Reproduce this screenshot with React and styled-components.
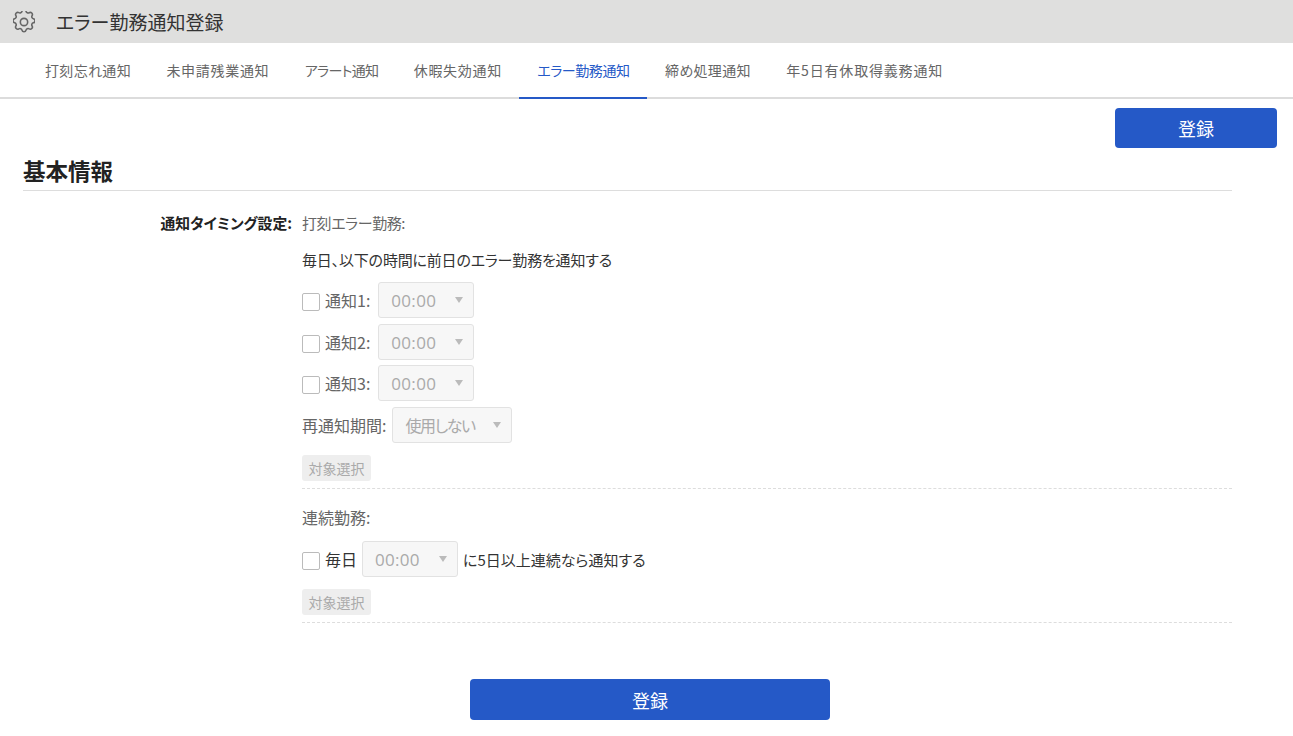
import React from "react";
import styled, { createGlobalStyle } from "styled-components";

const Global = createGlobalStyle`
  html, body { margin: 0; padding: 0; background: #fff; }
  body {
    font-family: "Noto Sans CJK JP", "Noto Sans", sans-serif;
    font-feature-settings: "palt";
    color: #333;
  }
  * { box-sizing: border-box; }
`;

const Page = styled.div`
  width: 1293px;
  height: 736px;
  overflow: hidden;
`;
const TitleBar = styled.header`
  height: 43px;
  background: #dfdfde;
  display: flex;
  align-items: center;
  padding-left: 13px;
  gap: 21px;
`;
const PageTitle = styled.h1`
  margin: 0;
  font-size: 19px;
  font-weight: 400;
  color: #333;
`;
const Tabs = styled.nav`
  height: 56px;
  border-bottom: 2px solid #dcdcdc;
  display: flex;
  padding-left: 27px;
`;
const Tab = styled.div`
  height: 56px;
  padding: 0 17.4px 0 18px;
  display: flex;
  align-items: center;
  font-size: 14px;
  letter-spacing: ${(p) => p.$ls}px;
  color: ${(p) => (p.$active ? "#2559c7" : "#666")};
  border-bottom: 2px solid ${(p) => (p.$active ? "#2559c7" : "transparent")};
`;
const TopActions = styled.div`
  display: flex;
  justify-content: flex-end;
  padding: 9px 16px 0 0;
`;
const PrimaryButton = styled.button`
  width: ${(p) => p.$width}px;
  height: ${(p) => p.$height}px;
  background: #2559c7;
  color: #fff;
  border: none;
  border-radius: 4px;
  font-family: inherit;
  font-size: 18px;
  padding: 0;
`;
const Section = styled.section`
  margin: 8px 61px 0 23px;
`;
const SectionTitle = styled.h2`
  margin: 0;
  height: 35px;
  font-size: 22.5px;
  line-height: 28px;
  font-weight: 700;
  color: #222;
  border-bottom: 1px solid #ddd;
`;
const FormRow = styled.div`
  display: flex;
  padding-top: 18px;
`;
const FieldLabel = styled.div`
  width: 269px;
  text-align: right;
  font-size: 14.8px;
  line-height: 28px;
  font-weight: 700;
  color: #222;
  margin-right: 10px;
  height: 28px;
`;
const Fields = styled.div`
  flex: 1;
`;
const Group = styled.div`
  border-bottom: 1px dashed #ddd;
  padding-bottom: 7px;
  margin-bottom: ${(p) => p.$mb || 0}px;
`;
const GroupTitle = styled.div`
  font-size: ${(p) => p.$size}px;
  letter-spacing: ${(p) => p.$ls || 0}px;
  line-height: 28px;
  height: 28px;
  color: #666;
`;
const Line = styled.div`
  display: flex;
  align-items: center;
  height: ${(p) => p.$h || 36}px;
  margin-top: ${(p) => p.$mt || 0}px;
  font-size: 15px;
  letter-spacing: ${(p) => p.$ls || 0}px;
  color: ${(p) => (p.$dark ? "#333" : "#666")};
`;
const FieldName = styled.span`
  font-size: 16px;
`;
const Check = styled.span`
  width: 18px;
  height: 18px;
  border: 1px solid #bbb;
  border-radius: 2px;
  background: #fff;
  margin-right: 5px;
  margin-top: 3px;
`;
const Select = styled.div`
  width: ${(p) => p.$w}px;
  height: 36px;
  margin: 0 ${(p) => p.$mr || 0}px 0 ${(p) => p.$ml || 6}px;
  background: #f7f7f7;
  border: 1px solid #e2e2e2;
  border-radius: 3px;
  color: #aaa;
  font-size: 16px;
  letter-spacing: -1.4px;
  display: flex;
  align-items: center;
  justify-content: space-between;
  padding: 0 10px 0 12px;
`;
const Time = styled.span`
  font-family: "Open Sans", "Noto Sans", sans-serif;
  font-size: 17px;
  letter-spacing: 0.3px;
`;
const Caret = styled.span`
  width: 0;
  height: 0;
  border-left: 4.5px solid transparent;
  border-right: 4.5px solid transparent;
  border-top: 6px solid #bbb;
  margin-bottom: 1px;
`;
const Ghost = styled.div`
  width: 69px;
  height: 26px;
  margin-top: 12px;
  background: #eee;
  border-radius: 3px;
  color: #aaa;
  font-size: 14px;
  display: flex;
  align-items: center;
  justify-content: center;
`;
const Footer = styled.div`
  display: flex;
  padding: 56px 0 0 470px;
`;

const Gear = () => (
  <svg width="22" height="22" viewBox="3 3 18 18" fill="none" stroke="#666" strokeWidth="1.3" strokeLinecap="round" strokeLinejoin="round">
    <path d="M10.33 3.32c.43-1.76 2.92-1.76 3.35 0a1.72 1.72 0 0 0 2.57 1.07c1.54-.94 3.3.83 2.37 2.37a1.72 1.72 0 0 0 1.06 2.57c1.76.43 1.76 2.92 0 3.35a1.72 1.72 0 0 0-1.07 2.57c.94 1.54-.83 3.3-2.37 2.37a1.72 1.72 0 0 0-2.57 1.06c-.43 1.76-2.92 1.76-3.35 0a1.72 1.72 0 0 0-2.57-1.07c-1.54.94-3.3-.83-2.37-2.37a1.72 1.72 0 0 0-1.06-2.57c-1.76-.43-1.76-2.92 0-3.35a1.72 1.72 0 0 0 1.07-2.57c-.94-1.54.83-3.3 2.37-2.37.996.608 2.296.07 2.57-1.06z" />
    <circle cx="12" cy="12" r="3" />
  </svg>
);

const TimeSelect = (props) => (
  <Select $w={96} {...props}>
    <Time>00:00</Time>
    <Caret />
  </Select>
);

const tabs = [
  ["打刻忘れ通知", 0.33],
  ["未申請残業通知", 0.7],
  ["アラート通知", -0.67],
  ["休暇失効通知", 0.67],
  ["エラー勤務通知", -0.43],
  ["締め処理通知", 0.33],
  ["年5日有休取得義務通知", 0.82],
];

export default function App() {
  return (
    <Page>
      <Global />
      <TitleBar>
        <Gear />
        <PageTitle>エラー勤務通知登録</PageTitle>
      </TitleBar>
      <Tabs>
        {tabs.map(([t, ls], i) => (
          <Tab key={t} $ls={ls} $active={i === 4}>{t}</Tab>
        ))}
      </Tabs>
      <TopActions>
        <PrimaryButton $width={162} $height={40}>登録</PrimaryButton>
      </TopActions>
      <Section>
        <SectionTitle>基本情報</SectionTitle>
        <FormRow>
          <FieldLabel>通知タイミング設定:</FieldLabel>
          <Fields>
            <Group $mb={14}>
              <GroupTitle $size={15} $ls={-0.4}>打刻エラー勤務:</GroupTitle>
              <Line $dark $h={28} $mt={8} $ls={-0.18}>毎日、以下の時間に前日のエラー勤務を通知する</Line>
              <Line $mt={9}><Check /><FieldName>通知1:</FieldName><TimeSelect $ml={8} /></Line>
              <Line $mt={6}><Check /><FieldName>通知2:</FieldName><TimeSelect $ml={8} /></Line>
              <Line $mt={5}><Check /><FieldName>通知3:</FieldName><TimeSelect $ml={8} /></Line>
              <Line $mt={6}><FieldName>再通知期間:</FieldName><Select $w={120}>使用しない<Caret /></Select></Line>
              <Ghost>対象選択</Ghost>
            </Group>
            <Group>
              <GroupTitle $size={16}>連続勤務:</GroupTitle>
              <Line $dark $mt={10}><Check /><FieldName>毎日</FieldName><TimeSelect $ml={5} $mr={5} />に5日以上連続なら通知する</Line>
              <Ghost>対象選択</Ghost>
            </Group>
          </Fields>
        </FormRow>
      </Section>
      <Footer>
        <PrimaryButton $width={360} $height={41}>登録</PrimaryButton>
      </Footer>
    </Page>
  );
}
